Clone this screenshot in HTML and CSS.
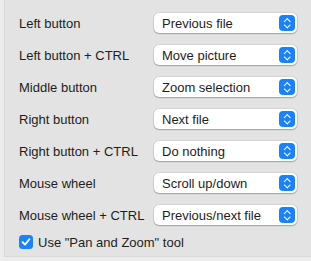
FILE: index.html
```html
<!DOCTYPE html>
<html lang="en">
<head>
    <meta charset="UTF-8">
    <title>Mouse settings</title>
    <link rel="stylesheet" href="styles.css">
</head>
<body>
    <div class="panel">
        <div class="rows">
            <div class="label">Left button</div>
            <div class="popup"><span>Previous file</span><i class="stepper"></i></div>

            <div class="label">Left button + CTRL</div>
            <div class="popup"><span>Move picture</span><i class="stepper"></i></div>

            <div class="label">Middle button</div>
            <div class="popup"><span>Zoom selection</span><i class="stepper"></i></div>

            <div class="label">Right button</div>
            <div class="popup"><span>Next file</span><i class="stepper"></i></div>

            <div class="label">Right button + CTRL</div>
            <div class="popup"><span>Do nothing</span><i class="stepper"></i></div>

            <div class="label">Mouse wheel</div>
            <div class="popup"><span>Scroll up/down</span><i class="stepper"></i></div>

            <div class="label">Mouse wheel + CTRL</div>
            <div class="popup"><span>Previous/next file</span><i class="stepper"></i></div>
        </div>

        <label class="check">
            <span class="box">
                <svg width="10" height="10" viewBox="0 0 10 10"><path d="M1.6 5.2 L4 7.6 L8.4 2.2" fill="none" stroke="#fff" stroke-width="1.8" stroke-linecap="round" stroke-linejoin="round"/></svg>
            </span>
            Use "Pan and Zoom" tool
        </label>
    </div>
</body>
</html>
```

FILE: styles.css
```css
body {
    margin: 0;
    background: #ececec;
    font-family: "Liberation Sans", Arial, sans-serif;
    font-size: 13px;
    color: #1d1d1d;
}

.panel {
    margin-left: 4px;
    height: 243px;
    padding: 13px 0 0 14px;
    background: #e3e3e3;
    border-left: 1px solid #d9d9d9;
    border-bottom: 1px solid #d9d9d9;
}

.rows {
    display: grid;
    grid-template-columns: 135px 143px;
    grid-auto-rows: 20px;
    row-gap: 12px;
    align-items: center;
}

.popup {
    position: relative;
    height: 20px;
    display: flex;
    align-items: center;
    padding-left: 8px;
    background: #fff;
    border-radius: 5px;
    box-shadow: 0 0 0 0.5px rgba(0, 0, 0, 0.12), 0 1px 1.5px rgba(0, 0, 0, 0.25);
}

.stepper {
    position: absolute;
    right: 2px;
    top: 2px;
    width: 16px;
    height: 16px;
    border-radius: 4px;
    background: #1a82fb;
}

.stepper::before,
.stepper::after {
    content: "";
    position: absolute;
    left: 5.5px;
    width: 3.5px;
    height: 3.5px;
    border-left: 1.5px solid #fff;
    border-top: 1.5px solid #fff;
}

.stepper::before {
    top: 4px;
    transform: rotate(45deg);
}

.stepper::after {
    top: 7.5px;
    transform: rotate(-135deg);
}

.check {
    display: flex;
    align-items: center;
    gap: 5px;
    margin-top: 9px;
    height: 16px;
}

.box {
    width: 14px;
    height: 14px;
    border-radius: 3.5px;
    background: #1a82fb;
    display: flex;
    align-items: center;
    justify-content: center;
}
```
